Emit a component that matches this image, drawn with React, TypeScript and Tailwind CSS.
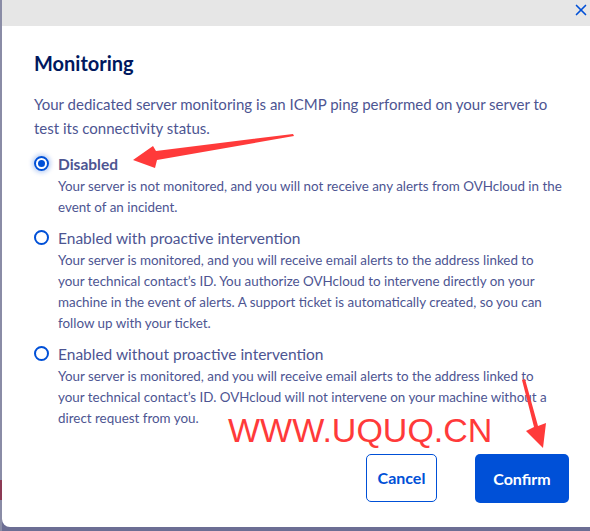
import { X } from "lucide-react";

const font = { fontFamily: '"Lato", "Liberation Sans", sans-serif' };

type Option = {
  id: string;
  label: string;
  lines: string[];
  selected?: boolean;
};

// line breaks follow the original dialog
const options: Option[] = [
  {
    id: "disabled",
    label: "Disabled",
    lines: [
      "Your server is not monitored, and you will not receive any alerts from OVHcloud in the",
      "event of an incident.",
    ],
    selected: true,
  },
  {
    id: "proactive",
    label: "Enabled with proactive intervention",
    lines: [
      "Your server is monitored, and you will receive email alerts to the address linked to",
      "your technical contact’s ID. You authorize OVHcloud to intervene directly on your",
      "machine in the event of alerts. A support ticket is automatically created, so you can",
      "follow up with your ticket.",
    ],
  },
  {
    id: "noproactive",
    label: "Enabled without proactive intervention",
    lines: [
      "Your server is monitored, and you will receive email alerts to the address linked to",
      "your technical contact’s ID. OVHcloud will not intervene on your machine without a",
      "direct request from you.",
    ],
  },
];

function Radio({ checked }: { checked?: boolean }) {
  if (checked) {
    return (
      <span className="mt-[4px] flex h-[15px] w-[15px] shrink-0 items-center justify-center rounded-full border-2 border-[#0050d7] shadow-[0_0_4px_2px_rgba(0,80,215,0.25)]">
        <span className="h-[7px] w-[7px] rounded-full bg-[#0050d7]" />
      </span>
    );
  }
  return (
    <span className="mt-[4px] h-[15px] w-[15px] shrink-0 rounded-full border-2 border-[#0050d7] bg-white" />
  );
}

export default function App() {
  return (
    <div className="relative flex h-[531px] w-[590px] overflow-hidden bg-[#6c6e94]" style={font}>
      <div className="flex w-[2px] shrink-0 flex-col">
        <div className="h-[480px] bg-[#8a8ca6]" />
        <div className="h-[20px] bg-[#8c3a55]" />
        <div className="flex-1 bg-[#8a8ca6]" />
      </div>

      <div className="flex h-[527px] flex-1 flex-col rounded-bl-[8px] bg-white">
        <div className="flex h-[26px] shrink-0 items-start justify-end bg-[#e6e6e6] pt-[1px]">
          <X size={18} strokeWidth={2.2} className="text-[#0050d7]" />
        </div>

        <div className="flex flex-1 flex-col pl-[32px] pr-[21px] pt-[24px]">
          <h2 className="text-[20px] font-bold leading-[26px] text-[#00185e]">Monitoring</h2>
          <p className="mt-[16px] text-[15px] leading-[24px] text-[#4d5592]">
            Your dedicated server monitoring is an ICMP ping performed on your server to test its connectivity status.
          </p>

          <div className="mt-[12px] flex flex-col gap-[8px]">
            {options.map((o) => (
              <label key={o.id} className="flex gap-[9px]">
                <Radio checked={o.selected} />
                <div className="flex flex-col">
                  <span
                    className={
                      o.selected
                        ? "text-[15.5px] font-bold leading-[24px] text-[#4d5592]"
                        : "text-[15.5px] leading-[24px] text-[#4d5592]"
                    }
                  >
                    {o.label}
                  </span>
                  {o.lines.map((line) => (
                    <span key={line} className="whitespace-nowrap text-[13.4px] leading-[21px] text-[#4d5592]">
                      {line}
                    </span>
                  ))}
                </div>
              </label>
            ))}
          </div>

          <div className="mt-auto mb-[24px] flex justify-end gap-[38px]">
            <button
              type="button"
              className="h-[48px] w-[71px] rounded-[5px] border border-[#0050d7] bg-white text-[16px] font-bold text-[#0050d7]"
            >
              Cancel
            </button>
            <button
              type="button"
              className="h-[49px] w-[94px] rounded-[5px] bg-[#0050d7] text-[16px] font-bold text-white"
            >
              Confirm
            </button>
          </div>
        </div>
      </div>

      {/* watermark + annotation arrows over the screenshot */}
      <span
        className="absolute left-[228px] top-[410px] text-[34px] leading-[40px] text-[#ff3a3a]"
        style={{ fontFamily: '"Liberation Sans", sans-serif' }}
      >
        WWW.UQUQ.CN
      </span>
      <svg className="pointer-events-none absolute left-0 top-0" width="590" height="531" viewBox="0 0 590 531">
        <polygon points="293,134 156,151 153,146 133,160 155,168 157,160 294,136" fill="#ff3a3a" />
        <polygon points="522,380 534,427 526,431 543,448 546,423 538,426 525,379" fill="#ff3a3a" />
      </svg>
    </div>
  );
}
